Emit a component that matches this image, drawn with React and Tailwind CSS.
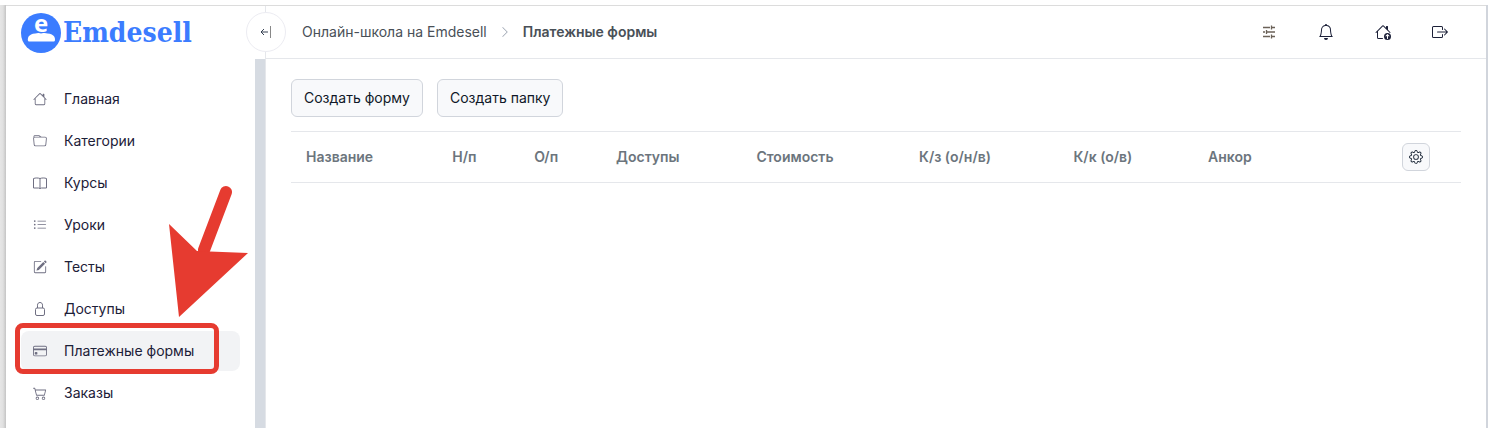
import {
  BsBell,
  BsBoxArrowRight,
  BsCart2,
  BsChevronRight,
  BsCreditCard,
  BsFolder,
  BsGear,
  BsHouse,
  BsHouseUp,
  BsListUl,
  BsPencilSquare,
} from "react-icons/bs";

function BookIcon({ className }) {
  return (
    <svg className={className} viewBox="0 0 14 14" fill="none" stroke="currentColor" aria-hidden="true">
      <path d="M0.500 2.500C2.500 1.800 5 1.800 7 2.500C9 1.800 11.500 1.800 13.500 2.500V12H8.500L7 12.500L5.500 12H0.500ZM7 2.500V12.500" />
    </svg>
  );
}

function LockIcon({ className }) {
  return (
    <svg className={className} viewBox="0 0 14 14" fill="none" stroke="currentColor" aria-hidden="true">
      <rect x="2.500" y="6" width="9" height="7.500" rx="1.500" />
      <path d="M4.500 6V3.200C4.500 1.500 5.500 0.500 7 0.500S9.500 1.500 9.500 3.200V6" />
    </svg>
  );
}

function SlidersIcon({ className }) {
  return (
    <svg className={className} viewBox="0 0 16 16" fill="none" stroke="#6b6258" strokeWidth="1.300" aria-hidden="true">
      <path d="M2 3.500H9M11 3.500H14M2 8H4M6 8H14M2 12.500H9M11 12.500H14" />
      <path d="M10.500 1.500V5.500M5.500 6V10M10.500 10.500V14.500" />
    </svg>
  );
}

const menu = [
  { label: "Главная", icon: BsHouse },
  { label: "Категории", icon: BsFolder },
  { label: "Курсы", icon: BookIcon },
  { label: "Уроки", icon: BsListUl },
  { label: "Тесты", icon: BsPencilSquare },
  { label: "Доступы", icon: LockIcon },
  { label: "Платежные формы", icon: BsCreditCard, active: true },
  { label: "Заказы", icon: BsCart2 },
];

const columns = [
  { title: "Название", width: "w-[12.5%]" },
  { title: "Н/п", width: "w-[7%]" },
  { title: "О/п", width: "w-[7%]" },
  { title: "Доступы", width: "w-[12%]" },
  { title: "Стоимость", width: "w-[13.9%]" },
  { title: "К/з (о/н/в)", width: "w-[13.2%]" },
  { title: "К/к (о/в)", width: "w-[11.5%]" },
  { title: "Анкор", width: "w-[16.6%]" },
];

const actions = [
  { label: "Настройки", icon: SlidersIcon },
  { label: "Уведомления", icon: BsBell },
  { label: "Школа", icon: BsHouseUp },
  { label: "Выход", icon: BsBoxArrowRight },
];

function Logo() {
  return (
    <a href="#" className="flex items-center gap-0.5 text-[#3b7cff]">
      <svg className="overflow-visible" width="40" height="40" viewBox="0 0 40 40" aria-hidden="true">
        <circle cx="20" cy="20" r="20" fill="currentColor" />
        <path
          d="M6.800 26.500C6.800 22 11 20 20.400 20S34 22 34 26.500C34 28 33.500 28.500 32.500 28.500H8.300C7.300 28.500 6.800 28 6.800 26.500Z"
          fill="#fff"
        />
        <circle cx="20" cy="12" r="8.500" fill="currentColor" />
        <text
          x="20"
          y="19"
          textAnchor="middle"
          fill="#fff"
          className="font-['Open_Sans',sans-serif] text-[24px] font-bold"
        >
          e
        </text>
      </svg>
      <span className="font-['DejaVu_Serif_Condensed','DejaVu_Serif',serif] text-[28px] leading-8 font-bold">
        Emdesell
      </span>
    </a>
  );
}

// red frame and arrow pointing at the active item
function Marker() {
  return (
    <>
      <span className="pointer-events-none absolute -top-2 -left-1.5 h-[51px] w-[204px] rounded-lg border-5 border-[#e63b30]" />
      <svg
        className="pointer-events-none absolute bottom-13 left-37"
        width="80"
        height="134"
        viewBox="0 0 80 134"
        aria-hidden="true"
      >
        <path d="M57 7L35 65" stroke="#e63b30" strokeWidth="12" strokeLinecap="round" />
        <path d="M0 39L28 66L79 68L10 132Z" fill="#e63b30" />
      </svg>
    </>
  );
}

function Sidebar() {
  return (
    <aside className="relative flex w-[260px] shrink-0 flex-col border-r border-gray-200">
      <div className="flex h-[53px] items-center pl-[15px]">
        <Logo />
      </div>
      <button
        type="button"
        aria-label="Свернуть меню"
        className="absolute top-1.5 -right-[21px] z-10 flex size-10 items-center justify-center rounded-full border border-[#ececf2] bg-white text-gray-700"
      >
        <svg width="12" height="12" viewBox="0 0 12 12" fill="none" stroke="currentColor" aria-hidden="true">
          <path d="M8 6H1.500M4 3L1 6L4 9" />
          <path d="M10.500 0V12" stroke="#888" />
        </svg>
      </button>
      <nav className="flex-1 border-r-10 border-[#d6dbe2] px-[15px] pt-5">
        <ul className="flex flex-col gap-0.5">
          {menu.map(({ label, icon: Icon, active }) => (
            <li key={label} className="relative">
              <a
                href="#"
                className={
                  "flex h-10 items-center gap-[17px] rounded-lg pl-3 text-sm text-[#1c2038] " +
                  (active ? "bg-[#f2f3f5]" : "")
                }
              >
                <Icon className="size-3.5 text-[#6f6f82]" />
                {label}
              </a>
              {active && <Marker />}
            </li>
          ))}
        </ul>
      </nav>
    </aside>
  );
}

function Header() {
  return (
    <header className="flex h-[53px] items-center justify-between border-b border-gray-200 pr-[38px] pl-9 text-sm text-[#495057]">
      <div className="flex items-center gap-3">
        <a href="#">Онлайн-школа на Emdesell</a>
        <BsChevronRight className="size-3 text-gray-400" />
        <span className="font-semibold">Платежные формы</span>
      </div>
      <div className="flex items-center gap-[41px] text-[#1c2038]">
        {actions.map(({ label, icon: Icon }) => (
          <button key={label} type="button" aria-label={label}>
            <Icon className="size-4" />
          </button>
        ))}
      </div>
    </header>
  );
}

export default function App() {
  const button = "h-[38px] rounded-md border border-gray-300 bg-[#f8f9fb] px-3 text-sm text-gray-900";

  return (
    <div className="flex min-h-screen flex-col bg-white pt-[5px] font-['Inter',sans-serif]">
      <div className="flex flex-1 border-r-2 border-r-gray-300">
        <div className="w-1.5 bg-linear-to-r from-[#e6e6e6] via-[#e0e0e0] to-[#c4c4c4]" />
        <div className="flex min-w-0 flex-1 border-t border-[#dcdcdc]">
          <Sidebar />
          <div className="min-w-0 flex-1">
            <Header />
            <main className="px-[25px] pt-5">
              <div className="flex gap-3.5">
                <button type="button" className={button}>Создать форму</button>
                <button type="button" className={button}>Создать папку</button>
              </div>
              <table className="mt-3.5 w-full table-fixed border-y border-gray-200 text-left text-sm text-[#6c757d]">
                <thead>
                  <tr className="h-[51px]">
                    {columns.map(({ title, width }) => (
                      <th key={title} className={width + " pl-[15px] font-semibold whitespace-nowrap"}>
                        {title}
                      </th>
                    ))}
                    <th className="pl-[15px]">
                      <button
                        type="button"
                        aria-label="Настроить столбцы"
                        className="flex size-7 items-center justify-center rounded-md border border-gray-300 bg-[#f8f9fb] text-gray-800"
                      >
                        <BsGear className="size-3.5" />
                      </button>
                    </th>
                  </tr>
                </thead>
              </table>
            </main>
          </div>
        </div>
      </div>
    </div>
  );
}
